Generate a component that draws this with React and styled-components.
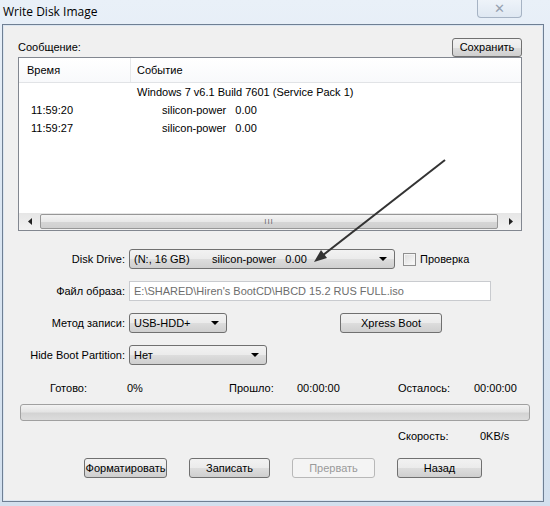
import React from "react";
import styled, { createGlobalStyle } from "styled-components";

const Global = createGlobalStyle`
  html, body {
    margin: 0;
    padding: 0;
    background: #dfe8f3;
  }
  body {
    font-family: "Liberation Sans", Arial, sans-serif;
    font-size: 11px;
    color: #000;
  }
`;

const Window = styled.div`
  position: relative;
  width: 550px;
  height: 506px;
  overflow: hidden;
  background: linear-gradient(to bottom, #e9f0f8 0%, #dbe6f2 40%, #d3e0ee 100%);
  display: flex;
  flex-direction: column;
`;

const TitleBar = styled.div`
  height: 24px;
  display: flex;
  align-items: center;
  justify-content: space-between;
  padding-left: 3px;
  padding-right: 28px;
  box-sizing: border-box;
`;

const Title = styled.div`
  font-family: "Open Sans", "Liberation Sans", sans-serif;
  font-size: 12px;
  color: #000;
  margin-top: -2px;
`;

const CloseButton = styled.div`
  width: 45px;
  height: 18px;
  margin-top: -6px;
  box-sizing: border-box;
  border: 1px solid #a6b3c4;
  border-top: none;
  border-radius: 0 0 4px 4px;
  background: linear-gradient(to bottom, #eef3f9, #dfe8f2);
  display: flex;
  align-items: center;
  justify-content: center;
  color: #96a1b0;
  font-size: 13px;
  font-family: "DejaVu Sans", sans-serif;
`;

const Client = styled.div`
  margin: 0 6px 4px 2px;
  flex: 1;
  background: #f0f0f0;
  border: 1px solid #6f7f93;
  box-shadow: inset 0 0 0 1px #dce6f1;
  padding: 12px 6px 0 15px;
  display: flex;
  flex-direction: column;
`;

const HeaderRow = styled.div`
  width: 504px;
  height: 20px;
  display: flex;
  align-items: center;
  justify-content: space-between;
`;

const Button = styled.div`
  width: ${(p) => p.$w}px;
  height: ${(p) => p.$h || 20}px;
  box-sizing: border-box;
  border: 1px solid ${(p) => (p.$disabled ? "#b8b8b8" : "#707070")};
  border-radius: 3px;
  background: ${(p) =>
    p.$disabled
      ? "#f4f4f4"
      : "linear-gradient(to bottom, #f2f2f2 0%, #ebebeb 50%, #dddddd 51%, #cfcfcf 100%)"};
  color: ${(p) => (p.$disabled ? "#9a9a9a" : "#000")};
  display: flex;
  align-items: center;
  justify-content: center;
  white-space: nowrap;
  overflow: visible;
  flex-shrink: 0;
`;

const ListBox = styled.div`
  width: 504px;
  height: 174px;
  box-sizing: border-box;
  border: 1px solid #828790;
  background: #fff;
  display: flex;
  flex-direction: column;
`;

const ListHeader = styled.div`
  height: 24px;
  flex-shrink: 0;
  display: grid;
  grid-template-columns: 112px 1fr;
  background: linear-gradient(to bottom, #ffffff, #f8f9fb);
  border-bottom: 1px solid #e1e3e6;
`;

const HeaderCell = styled.div`
  display: flex;
  align-items: center;
  padding-left: ${(p) => p.$pad}px;
  border-right: ${(p) => (p.$divider ? "1px solid #e6e8ea" : "none")};
`;

const Rows = styled.div`
  flex: 1;
  display: flex;
  flex-direction: column;
`;

const Row = styled.div`
  height: 18px;
  display: grid;
  grid-template-columns: 112px 1fr;
  align-items: center;
`;

const TimeCell = styled.div`
  padding-left: 12px;
`;

const EventCell = styled.div`
  padding-left: ${(p) => p.$indent}px;
  white-space: pre;
`;

const HScroll = styled.div`
  height: 17px;
  flex-shrink: 0;
  display: flex;
  align-items: center;
  background: linear-gradient(to bottom, #e6e6e6, #f2f2f2);
`;

const ScrollArrow = styled.div`
  width: 21px;
  height: 17px;
  display: flex;
  align-items: center;
  justify-content: center;
  flex-shrink: 0;
`;

const Thumb = styled.div`
  flex: 1;
  height: 15px;
  box-sizing: border-box;
  border: 1px solid #979797;
  border-radius: 2px;
  background: linear-gradient(to bottom, #f4f4f4 0%, #e8e8e8 50%, #d6d6d6 51%, #cfcfcf 100%);
  display: flex;
  align-items: center;
  justify-content: center;
  font-size: 8px;
  color: #6b6b6b;
  letter-spacing: 1px;
  margin-right: 2px;
`;

const FormGrid = styled.div`
  margin-top: 18px;
  display: grid;
  grid-template-columns: 107px 1fr;
  column-gap: 4px;
  row-gap: 12px;
  grid-auto-rows: 20px;
  align-items: center;
`;

const Label = styled.div`
  text-align: right;
  white-space: nowrap;
`;

const Field = styled.div`
  display: flex;
  align-items: center;
`;

const Combo = styled.div`
  width: ${(p) => p.$w}px;
  height: 20px;
  box-sizing: border-box;
  border: 1px solid #707070;
  border-radius: 3px;
  background: linear-gradient(to bottom, #f2f2f2 0%, #ebebeb 50%, #dddddd 51%, #cfcfcf 100%);
  display: flex;
  align-items: center;
  padding-left: 4px;
  padding-right: 7px;
  white-space: pre;
`;

const ComboText = styled.div`
  flex: 1;
  display: flex;
  align-items: center;
`;

const Seg = styled.span`
  display: inline-block;
  width: ${(p) => (p.$w ? `${p.$w}px` : "auto")};
`;

const DropArrow = styled.div`
  width: 0;
  height: 0;
  border-left: 4px solid transparent;
  border-right: 4px solid transparent;
  border-top: 4px solid #000;
`;

const CheckBox = styled.div`
  width: 13px;
  height: 13px;
  box-sizing: border-box;
  margin-left: 8px;
  border: 1px solid #8f8f8f;
  background: linear-gradient(135deg, #dcdcdc, #fbfbfb);
  box-shadow: inset 0 0 0 1px #f4f4f4;
`;

const CheckLabel = styled.span`
  margin-left: 4px;
`;

const TextBox = styled.div`
  width: 362px;
  height: 20px;
  box-sizing: border-box;
  border: 1px solid #c9cbcf;
  background: #fff;
  color: #6d6d6d;
  display: flex;
  align-items: center;
  padding-left: 4px;
  white-space: nowrap;
`;

const StatRow = styled.div`
  display: flex;
  align-items: center;
  height: 14px;
  margin-top: ${(p) => p.$mt}px;
  padding-left: ${(p) => p.$pl}px;
`;

const Cell = styled.div`
  width: ${(p) => p.$w}px;
  flex-shrink: 0;
  white-space: nowrap;
`;

const Progress = styled.div`
  margin-top: 9px;
  margin-left: 2px;
  width: 510px;
  height: 17px;
  box-sizing: border-box;
  border: 1px solid #a0a0a0;
  border-radius: 3px;
  background: linear-gradient(to bottom, #f3f3f3 0%, #e4e4e4 45%, #d3d3d3 55%, #dcdcdc 100%);
`;

const ButtonRow = styled.div`
  margin-top: 15px;
  display: flex;
  gap: 22px;
  padding-left: 66px;
`;

const Overlay = styled.svg`
  position: absolute;
  left: 0;
  top: 0;
  pointer-events: none;
`;

function Arrow() {
  return (
    <Overlay width="550" height="506" viewBox="0 0 550 506">
      <line x1="445" y1="160" x2="318" y2="259" stroke="#333" strokeWidth="2" />
      <path d="M314 262 L321 250 L327 258 Z" fill="#333" />
    </Overlay>
  );
}

export default function App() {
  return (
    <>
      <Global />
      <Window>
        <TitleBar>
          <Title>Write Disk Image</Title>
          <CloseButton>✕</CloseButton>
        </TitleBar>
        <Client>
          <HeaderRow>
            <span>Сообщение:</span>
            <Button $w={70} $h={19}>
              Сохранить
            </Button>
          </HeaderRow>
          <ListBox>
            <ListHeader>
              <HeaderCell $pad={8} $divider>
                Время
              </HeaderCell>
              <HeaderCell $pad={6}>Событие</HeaderCell>
            </ListHeader>
            <Rows>
              <Row>
                <TimeCell />
                <EventCell $indent={6}>Windows 7 v6.1 Build 7601 (Service Pack 1)</EventCell>
              </Row>
              <Row>
                <TimeCell>11:59:20</TimeCell>
                <EventCell $indent={31}>silicon-power   0.00</EventCell>
              </Row>
              <Row>
                <TimeCell>11:59:27</TimeCell>
                <EventCell $indent={31}>silicon-power   0.00</EventCell>
              </Row>
            </Rows>
            <HScroll>
              <ScrollArrow>
                <svg width="4" height="7" viewBox="0 0 4 7">
                  <path d="M4 0 L0 3.5 L4 7 Z" fill="#222" />
                </svg>
              </ScrollArrow>
              <Thumb>III</Thumb>
              <ScrollArrow>
                <svg width="4" height="7" viewBox="0 0 4 7">
                  <path d="M0 0 L4 3.5 L0 7 Z" fill="#222" />
                </svg>
              </ScrollArrow>
            </HScroll>
          </ListBox>

          <FormGrid>
            <Label>Disk Drive:</Label>
            <Field>
              <Combo $w={266}>
                <ComboText>
                  <Seg $w={78}>(N:, 16 GB)</Seg>
                  <Seg>silicon-power   0.00</Seg>
                </ComboText>
                <DropArrow />
              </Combo>
              <CheckBox />
              <CheckLabel>Проверка</CheckLabel>
            </Field>

            <Label>Файл образа:</Label>
            <Field>
              <TextBox>E:\SHARED\Hiren's BootCD\HBCD 15.2 RUS FULL.iso</TextBox>
            </Field>

            <Label>Метод записи:</Label>
            <Field>
              <Combo $w={98}>
                <ComboText>USB-HDD+</ComboText>
                <DropArrow />
              </Combo>
              <Button $w={102} style={{ marginLeft: 113 }}>
                Xpress Boot
              </Button>
            </Field>

            <Label>Hide Boot Partition:</Label>
            <Field>
              <Combo $w={138}>
                <ComboText>Нет</ComboText>
                <DropArrow />
              </Combo>
            </Field>
          </FormGrid>

          <StatRow $mt={16} $pl={32}>
            <Cell $w={77}>Готово:</Cell>
            <Cell $w={102}>0%</Cell>
            <Cell $w={68}>Прошло:</Cell>
            <Cell $w={101}>00:00:00</Cell>
            <Cell $w={76}>Осталось:</Cell>
            <Cell $w={60}>00:00:00</Cell>
          </StatRow>

          <Progress />

          <StatRow $mt={8} $pl={380}>
            <Cell $w={82}>Скорость:</Cell>
            <Cell $w={50}>0KB/s</Cell>
          </StatRow>

          <ButtonRow>
            <Button $w={83}>Форматировать</Button>
            <Button $w={81}>Записать</Button>
            <Button $w={83} $disabled>
              Прервать
            </Button>
            <Button $w={85}>Назад</Button>
          </ButtonRow>
        </Client>
        <Arrow />
      </Window>
    </>
  );
}
